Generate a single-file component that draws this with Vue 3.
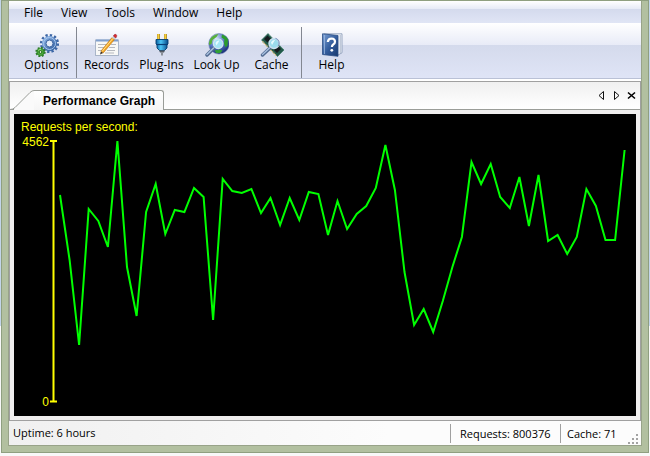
<script setup>
import { computed } from 'vue'

const menus = ['File', 'View', 'Tools', 'Window', 'Help']

const groups = [['Options'], ['Records', 'Plug-Ins', 'Look Up', 'Cache'], ['Help']]

// vertical position of each sample, measured down from the top of the plot
const samples = [
  58, 123, 208, 72, 84, 110, 4, 130, 179, 75, 47, 97, 73, 75, 51, 60, 183, 42, 54, 56,
  52, 76, 61, 88, 61, 83, 55, 57, 98, 64, 92, 77, 69, 51, 8, 53, 135, 188, 172, 195,
  164, 130, 100, 25, 47, 27, 60, 71, 40, 89, 38, 104, 98, 117, 100, 52, 69, 103, 103, 13
]

const line = computed(() =>
  samples.map((y, i) => `${(10 + i * 9.57).toFixed(1)},${y}`).join(' ')
)
</script>

<template>
  <div class="desktop">
    <main class="window">
      <nav class="menu">
        <button v-for="m in menus" :key="m" type="button">{{ m }}</button>
      </nav>

      <div class="toolbar">
        <div v-for="(g, gi) in groups" :key="gi" class="group">
          <button v-for="name in g" :key="name" type="button" class="tool">
            <svg v-if="name === 'Options'" viewBox="0 0 24 24" aria-hidden="true">
              <defs>
                <linearGradient id="gearBlue" x1="0" y1="0" x2="1" y2="1">
                  <stop offset="0" stop-color="#8db4e6" />
                  <stop offset="1" stop-color="#2f5c9e" />
                </linearGradient>
              </defs>
              <circle cx="14.5" cy="10.5" r="8.3" fill="none" stroke="#3e67a5" stroke-width="2.6" stroke-dasharray="2.3 2.05" />
              <circle cx="14.5" cy="10.5" r="5.6" fill="none" stroke="url(#gearBlue)" stroke-width="4" />
              <circle cx="14.5" cy="10.5" r="6" fill="none" stroke="#a9c8ee" stroke-width="1" />
              <circle cx="14.5" cy="10.5" r="3.5" fill="#e6edf9" stroke="#365f9e" stroke-width="1" />
              <path d="M8.6 14.5 A7 7 0 0 0 20 15" fill="none" stroke="#3f6cab" stroke-width="1" />
              <circle cx="5.5" cy="19" r="4.2" fill="none" stroke="#2e7d28" stroke-width="2" stroke-dasharray="1.8 1.5" />
              <circle cx="5.5" cy="19" r="3.6" fill="#4fae3b" stroke="#2e8428" stroke-width="1" />
              <circle cx="5.5" cy="19" r="1.4" fill="#e0f5d5" stroke="#216c1c" stroke-width="1" />
              <path d="M3.3 17.4 A3 3 0 0 1 6 16.2" fill="none" stroke="#a9e38e" />
            </svg>

            <svg v-else-if="name === 'Records'" viewBox="0 0 24 24" aria-hidden="true">
              <rect x="0.5" y="7" width="23" height="15.5" fill="#f8f8f6" stroke="#a9b5c8" />
              <path d="M1 7.500h22" stroke="#7f9fce" stroke-width="2" />
              <path d="M3 11.500h9M16 11.500h5M3 14.500h7M14 14.500h6M3 17.500h5M12 17.500h8M10 20h9" stroke="#b5b8be" stroke-width="1" />
              <path d="M5 21.500l1-3.500 2.200 2z" fill="#3e3428" />
              <path d="M6 18L17 4.500l2.500 2L8.200 20z" fill="#f5a623" stroke="#b36f13" stroke-width=".6" />
              <path d="M7 18.500L18 5.300" stroke="#ffe08a" stroke-width="1" />
              <path d="M17 4.500l1.300-1.500 2.500 2L19.500 6.500z" fill="#c9d0da" />
              <path d="M18.300 3L19.500 1.500q1.500-.8 2.200.8.3 1-.9 2.700z" fill="#d8272d" stroke="#8f1d25" stroke-width=".5" />
            </svg>

            <svg v-else-if="name === 'Plug-Ins'" viewBox="0 0 24 24" aria-hidden="true">
              <defs>
                <linearGradient id="plugBlue">
                  <stop offset="0" stop-color="#075c9f" />
                  <stop offset=".4" stop-color="#4cc5f5" />
                  <stop offset="1" stop-color="#064a8a" />
                </linearGradient>
              </defs>
              <path d="M8.500 1v6M15.500 1v6" stroke="#a97b09" stroke-width="2.600" />
              <path d="M8.300 1v6M15.300 1v6" stroke="#f7d238" stroke-width="1.500" />
              <path d="M6 6.500h12v4.500l-1 1v3l-2.500 2.500h-5L7 15v-3l-1-1z" fill="url(#plugBlue)" stroke="#08406f" stroke-width=".9" />
              <path d="M6.500 11.500h11" stroke="#083e75" stroke-width="1.200" />
              <path d="M9 17.500h6l-1 2h-4z" fill="#575d66" />
              <path d="M12 19v3.500" stroke="#8a9099" stroke-width="2" />
            </svg>

            <svg v-else-if="name === 'Look Up'" viewBox="0 0 24 24" aria-hidden="true">
              <defs>
                <radialGradient id="sea" cx=".35" cy=".25" r=".8">
                  <stop offset="0" stop-color="#d8e6fa" />
                  <stop offset=".5" stop-color="#5878c5" />
                  <stop offset="1" stop-color="#152a72" />
                </radialGradient>
              </defs>
              <circle cx="14" cy="10.800" r="10.300" fill="url(#sea)" stroke="#7486b6" stroke-width=".6" />
              <path d="M5.500 5.500q3-4 8-4.500l-2 3-4 3-1 4-2.500 1q-.5-3 1.500-6.500z" fill="#58b03c" />
              <path d="M17 1.500q4.500 1.500 6 5l-.5 6-2 2-1.500-4 .5-4-3-2z" fill="#2c9d2d" />
              <path d="M9.500 17.500l5-1 3 1-2 2.500-4 .2z" fill="#32a136" />
              <path d="M9 15L2 22" stroke="#50698f" stroke-width="3.400" stroke-linecap="round" />
              <path d="M8.500 15L2 21.500" stroke="#a9c0df" stroke-width="1.400" stroke-linecap="round" />
              <circle cx="13.200" cy="10.800" r="4.800" fill="#a4e4f6" stroke="#d3e5f2" stroke-width="1.200" />
              <path d="M10.500 10q1-3 4-2.500l-3 5z" fill="#e7fbff" />
            </svg>

            <svg v-else-if="name === 'Cache'" viewBox="0 0 24 24" aria-hidden="true">
              <path d="M8 .5L1.500 7 17.500 23.500 24 17z" fill="#22594a" stroke="#31705b" stroke-width=".6" />
              <path d="M2.500 8.500L16.500 23" stroke="#d9b466" stroke-width="1.500" stroke-dasharray="1 1" />
              <path d="M7.500 2.500L4 6l3.500 3.500L11 6zM18 13l-4 4 3 3 4-4z" fill="#171c1f" />
              <path d="M9 2L23 16" stroke="#5c9079" stroke-width="1" stroke-dasharray="2 1.500" />
              <path d="M10 15L2.500 22" stroke="#526b91" stroke-width="3.400" stroke-linecap="round" />
              <path d="M9.500 15L2.500 21.500" stroke="#a9c0df" stroke-width="1.400" stroke-linecap="round" />
              <circle cx="14" cy="10.500" r="5" fill="#9bdced" stroke="#cee1f0" stroke-width="1.400" />
              <path d="M15.500 5.300a5 5 0 0 1 2.500 8" fill="none" stroke="#6e8bb6" />
              <path d="M11 9.500q1-3 4-2.500l-3 5z" fill="#e7fbff" />
            </svg>

            <svg v-else viewBox="0 0 24 24" aria-hidden="true">
              <defs>
                <linearGradient id="cover" x1="0" y1="0" x2="1" y2="1">
                  <stop offset="0" stop-color="#7ba0d4" />
                  <stop offset=".5" stop-color="#365f9f" />
                  <stop offset="1" stop-color="#18396e" />
                </linearGradient>
              </defs>
              <path d="M4 .8h18v19L18 22z" fill="#eef2f8" stroke="#8495b2" stroke-width=".8" />
              <path d="M20.300 2v18" stroke="#b4bfd1" />
              <path d="M2.500 .8L18 2.500v20.800L2.500 21.500z" fill="url(#cover)" stroke="#294c84" stroke-width=".8" />
              <path d="M4.500 2v19" stroke="#9cb7de" stroke-width=".8" />
              <path d="M7.800 9q.4-3.500 3.700-3.500 3.500.2 3.500 3.300 0 1.700-1.800 2.700-1.300.8-1.300 2.500" fill="none" stroke="#fff" stroke-width="2.200" />
              <circle cx="11.800" cy="17.300" r="1.400" fill="#fff" />
            </svg>
            <span>{{ name }}</span>
          </button>
        </div>
      </div>

      <section class="dock">
        <header class="tabs">
          <svg class="slant" viewBox="0 0 24 20" aria-hidden="true">
            <path d="M4 20V18.500L20 2.500Q22 .5 24 .5V20z" fill="#fafafa" />
            <path d="M0 19.500Q3 19.500 5 17.500L20 2.500Q22 .5 24 .5" fill="none" stroke="#9a9d98" />
          </svg>
          <button type="button" class="tab">Performance Graph</button>
          <div class="tab-actions">
            <button type="button" aria-label="Previous tab">
              <svg viewBox="0 0 9 9"><path d="M6.500 .5v8L2 4.500z" fill="none" stroke="#111" /></svg>
            </button>
            <button type="button" aria-label="Next tab">
              <svg viewBox="0 0 9 9"><path d="M2.500 .5v8L7 4.500z" fill="none" stroke="#111" /></svg>
            </button>
            <button type="button" aria-label="Close tab">
              <svg viewBox="0 0 9 9"><path d="M1 1.500l7 6M8 1.500l-7 6" stroke="#000" stroke-width="1.600" /></svg>
            </button>
          </div>
        </header>

        <div class="page">
          <figure class="graph">
            <figcaption>Requests per second:</figcaption>
            <div class="plot">
              <div class="scale">
                <span>4562</span>
                <span>0</span>
              </div>
              <svg class="chart" viewBox="0 0 586 270" preserveAspectRatio="none" aria-hidden="true">
                <path class="axis" d="M3.500 4V264.500M0 4H7M0 264.500H7" />
                <polyline class="series" :points="line" />
              </svg>
            </div>
          </figure>
        </div>
      </section>

      <footer class="status">
        <span class="uptime">Uptime: 6 hours</span>
        <span class="cell requests">Requests: 800376</span>
        <span class="cell cache">Cache: 71</span>
        <svg class="grip" viewBox="0 0 11 11" aria-hidden="true">
          <path d="M8 0h2v2H8zM4 4h2v2H4zM8 4h2v2H8zM0 8h2v2H0zM4 8h2v2H4zM8 8h2v2H8z" fill="#a3a3a3" />
        </svg>
      </footer>
    </main>
  </div>
</template>

<style>
body {
  margin: 0;
}
</style>

<style scoped>
.desktop {
  box-sizing: border-box;
  min-height: 100vh;
  display: flex;
  padding: 0 1px 3px;
  background: linear-gradient(#c3d5ea 0 326px, #f8f8f8 326px);
  font-family: "Open Sans", "Noto Sans", sans-serif;
  font-size: 12px;
  line-height: 16px;
  color: #000;
}

button {
  border: 0;
  padding: 0;
  background: none;
  font: inherit;
  color: inherit;
}

svg {
  display: block;
}

.window {
  box-sizing: border-box;
  flex: 1;
  min-width: 0;
  display: flex;
  flex-direction: column;
  border: 1px solid #8f9f80;
  padding: 0 7px 7px;
  background: #98a389;
  box-shadow: inset 6px 0 #b2c0a0, inset -6px 0 #b2c0a0, inset 0 -6px #b2c0a0;
}

.menu {
  display: flex;
  gap: 18px;
  height: 22px;
  padding: 0 15px;
  background: linear-gradient(#fff, #e6eaf6 8px, #d4daed 8px, #e0e5f5);
}

.menu button {
  line-height: 24px;
}

.toolbar {
  display: flex;
  height: 55px;
  padding: 0 10px;
  background: linear-gradient(#fff, #e8ebf7 22px, #d4daec 22px, #dfe4f6);
  border-bottom: 1px solid #bac1d6;
}

.group {
  display: flex;
}

.group + .group {
  margin: 4px 0 0 2px;
  padding-left: 2px;
  border-left: 1px solid #838791;
}

.group + .group .tool {
  padding-top: 6px;
}

.tool {
  width: 55px;
  display: flex;
  flex-direction: column;
  align-items: center;
  justify-content: flex-start;
  padding-top: 10px;
  white-space: nowrap;
}

.tool svg {
  width: 24px;
  height: 24px;
}

.dock {
  flex: 1;
  display: flex;
  flex-direction: column;
  margin-top: 2px;
  border: 1px solid #a0a0a0;
  background: #f0eeee;
  box-shadow: 0 -2px #fff;
}

.tabs {
  display: flex;
  align-items: flex-end;
  height: 27px;
  border-bottom: 1px solid #9a9d98;
  background: linear-gradient(#f0f0f0, #fff);
}

.slant {
  width: 24px;
  height: 20px;
  margin-bottom: -1px;
}

.tab {
  height: 20px;
  margin-bottom: -1px;
  padding: 0 8px 0 9px;
  border-top: 1px solid #9a9d98;
  border-right: 1px solid #9a9d98;
  border-radius: 0 3px 0 0;
  background: linear-gradient(#fff, #f5f5f5);
  font: bold 12px/18px "Liberation Sans", Arial, sans-serif;
}

.tab-actions {
  display: flex;
  align-self: center;
  gap: 6px;
  margin-left: auto;
  padding-right: 4px;
}

.tab-actions svg {
  width: 9px;
  height: 9px;
}

.page {
  flex: 1;
  display: flex;
  padding: 4px;
}

.graph {
  flex: 1;
  min-width: 0;
  margin: 0;
  padding: 5px 0 9px;
  background: #000;
  color: #ff0;
  font: 12px/16px "Liberation Sans", Arial, sans-serif;
}

.graph figcaption {
  padding-left: 7px;
}

.plot {
  display: grid;
  grid-template-columns: 36px 1fr;
  margin-top: 2px;
}

.scale {
  display: flex;
  flex-direction: column;
  justify-content: space-between;
  align-items: flex-end;
  padding-right: 1px;
  height: 270px;
  line-height: 10px;
}

.chart {
  width: 100%;
  height: 270px;
}

.axis,
.series {
  fill: none;
  stroke-width: 2px;
  vector-effect: non-scaling-stroke;
}

.axis {
  stroke: #ff0;
}

.series {
  stroke: #0f0;
}

.status {
  display: flex;
  align-items: center;
  height: 24px;
  background: linear-gradient(90deg, #f0f0f0, #fcfcfc 60%);
  font-size: 11px;
}

.uptime {
  flex: 1;
  padding-left: 4px;
}

.cell {
  border-left: 1px solid #a0a0a0;
  line-height: 19px;
  box-sizing: border-box;
}

.requests {
  width: 110px;
  padding-left: 9px;
}

.cache {
  width: 66px;
  padding-left: 6px;
}

.grip {
  align-self: flex-end;
  width: 11px;
  height: 11px;
  margin: 0 2px;
}
</style>
